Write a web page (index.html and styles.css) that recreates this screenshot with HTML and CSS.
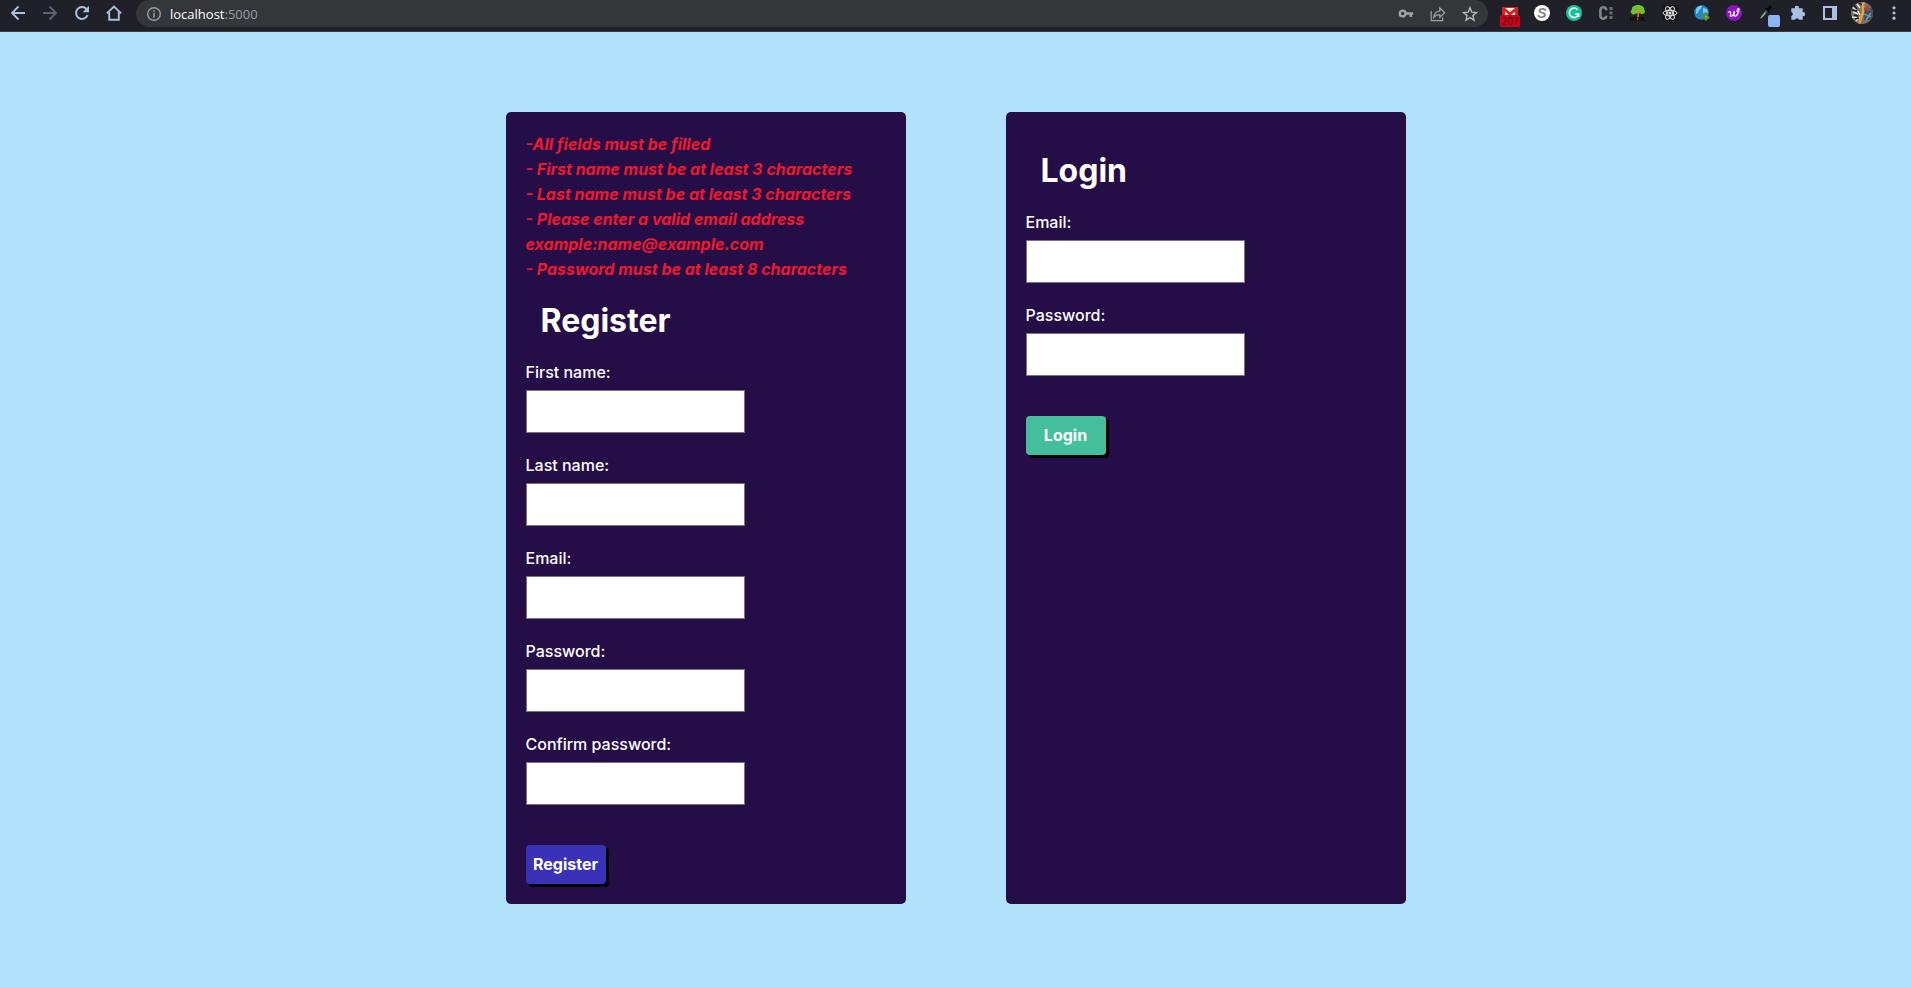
FILE: index.html
```html
<!DOCTYPE html>
<html lang="en">
<head>
<meta charset="utf-8">
<meta name="viewport" content="width=device-width, initial-scale=1">
<title>Login and Registration</title>
<link rel="stylesheet" href="styles.css">
</head>
<body>
<header class="toolbar">
  <nav class="group" aria-label="Navigation">
    <button class="tool" type="button" aria-label="Back"><svg width="16" height="16" viewBox="0 0 16 16"><path d="M15 8H2M8.500 1.500 2 8l6.500 6.500" fill="none" stroke="#a9bfe3" stroke-width="1.900"/></svg></button>
    <button class="tool" type="button" aria-label="Forward"><svg width="16" height="16" viewBox="0 0 16 16"><path d="M1 8h13M7.500 1.500 14 8l-6.500 6.500" fill="none" stroke="#5c6376" stroke-width="1.900"/></svg></button>
    <button class="tool" type="button" aria-label="Reload"><svg width="16" height="16" viewBox="0 0 16 16"><path d="M13.600 10.200A6 6 0 1 1 12.600 4" fill="none" stroke="#a9bfe3" stroke-width="2"/><path d="M15 .8v6.400H8.600z" fill="#a9bfe3"/></svg></button>
    <button class="tool" type="button" aria-label="Home"><svg width="16" height="16" viewBox="0 0 16 16"><path d="M.8 8.400 8 1.600l7.200 6.800M3.200 7v7.800h9.600V7" fill="none" stroke="#a9bfe3" stroke-width="1.900"/></svg></button>
  </nav>
  <div class="omnibox">
    <svg class="info" width="16" height="16" viewBox="0 0 16 16"><circle cx="8" cy="8" r="6.300" fill="none" stroke="#9a9da3" stroke-width="1.400"/><path d="M8 7v4.500M8 4.300v1.500" stroke="#9a9da3" stroke-width="1.600"/></svg>
    <p class="url">localhost<span class="port">:5000</span></p>
    <div class="group">
      <button class="tool" type="button" aria-label="Passwords"><svg width="16" height="16" viewBox="0 0 16 16"><circle cx="4.700" cy="7.500" r="2.900" fill="none" stroke="#a0a2a6" stroke-width="2.400"/><path d="M8 7.500h7.200M12.800 7.500V11" stroke="#a0a2a6" stroke-width="2.600" fill="none"/></svg></button>
      <button class="tool" type="button" aria-label="Share"><svg width="16" height="16" viewBox="0 0 16 16"><path d="M1.200 5v9.700h11.500v-3.500" fill="none" stroke="#a0a2a6" stroke-width="1.200"/><path d="M3.800 11.300C4.300 7.500 6.500 5.300 9.800 5V2l5 4.700-5 4.600V8.600c-2.700 0-4.500.8-6 2.700z" fill="none" stroke="#a0a2a6" stroke-width="1.200"/></svg></button>
      <button class="tool" type="button" aria-label="Bookmark"><svg width="16" height="16" viewBox="0 0 16 16"><path d="m8 1.700 1.800 4.400 4.700.4-3.600 3.100 1.100 4.600L8 11.700l-4 2.500 1.100-4.600-3.600-3.100 4.700-.4z" fill="none" stroke="#b4b6ba" stroke-width="1.400"/></svg></button>
    </div>
  </div>
  <div class="group">
    <button class="tool" type="button" aria-label="Mail"><svg width="16" height="12" viewBox="0 0 16 12"><path d="M0 0h16v12H0z" fill="#f3f3f3"/><path d="M0 0h16v2L8 9 3 4.500V12H0zM13 4.500 16 2v10h-3z" fill="#d9201b"/><path d="m3 1 5 4.300L13 1z" fill="#f3f3f3"/></svg><span class="badge">207</span></button>
    <button class="tool" type="button" aria-label="S extension"><span class="disc">S</span></button>
    <button class="tool" type="button" aria-label="Grammar"><svg width="16" height="16" viewBox="0 0 16 16"><circle cx="8" cy="8" r="8" fill="#15c39a"/><path d="M11.600 4.700A4.700 4.700 0 1 0 12.600 9H9.200M12.600 8.500v3.400" fill="none" stroke="#fff" stroke-width="1.500"/></svg></button>
    <button class="tool" type="button" aria-label="Code extension"><svg width="16" height="16" viewBox="0 0 16 16"><path d="M8.200 5.200V4.600A3 3 0 0 0 2.400 4.600v6.800a3 3 0 0 0 5.800 0v-.6" fill="none" stroke="#858585" stroke-width="2.500"/><path d="M11.500 2h3v3h-3zM11.500 6.500h3v3h-3zM11.500 11h3v3h-3z" fill="#6f6f6f"/></svg></button>
    <button class="tool" type="button" aria-label="HTML tree"><svg width="16" height="16" viewBox="0 0 16 16"><path d="M5 .8a4 4 0 0 1 6 0 3 3 0 0 1 3 3.700 2.600 2.600 0 0 1-2.500 4.400L8.500 7.500 5 9A2.600 2.600 0 0 1 2 4.600 3 3 0 0 1 5 .8z" fill="#62c92f"/><path d="M8.300 3.500 8 15M8 8.500l3-2.500M8 8 5.500 6" fill="none" stroke="#d98a2b" stroke-width="1.500"/><text x="8" y="16" text-anchor="middle" font-family="Liberation Sans, sans-serif" font-size="6" font-weight="bold" fill="#050505">HTML</text></svg></button>
    <button class="tool" type="button" aria-label="React tools"><svg width="16" height="16" viewBox="0 0 16 16"><path d="M0 0h16v16H0z" fill="#191919"/><g fill="none" stroke="#e6e6e6" stroke-width="1"><ellipse cx="8" cy="8" rx="7" ry="2.700"/><ellipse cx="8" cy="8" rx="7" ry="2.700" transform="rotate(60 8 8)"/><ellipse cx="8" cy="8" rx="7" ry="2.700" transform="rotate(120 8 8)"/></g><circle cx="8" cy="8" r="1.500" fill="#e6e6e6"/></svg></button>
    <button class="tool" type="button" aria-label="Translate"><svg width="16" height="16" viewBox="0 0 16 16"><circle cx="7.500" cy="7.500" r="7.300" fill="#2487c5"/><path d="M2 4c2-3 5-3.500 6-3L7 4 5 5 4 8 2 9zM9 3l4 1 1 4-3-1-2 2z" fill="#79c9ec"/><path d="M8 9.500c2-2 4-1 5 0l3 3-4 3.500-3-2.500z" fill="#62882c"/><path d="m11 10.500 2 1-1 2z" fill="#b5c75b"/></svg></button>
    <button class="tool" type="button" aria-label="W extension"><svg width="16" height="16" viewBox="0 0 16 16"><circle cx="8" cy="8" r="8" fill="#8d12c0"/><path d="M2.500 7.500c2-2 2.500-.5 2 2s1.500 2.500 3-.5l1-3c-1 4-.7 5.500.8 5.200 2.200-.5 3.800-5 3.600-7.200-.2-1.300-2.200.8-1.700 3" fill="none" stroke="#fff" stroke-width="1.200"/></svg></button>
    <button class="tool" type="button" aria-label="Colour picker"><svg width="16" height="16" viewBox="0 0 16 16"><path d="m2 14 1-3 5-6 1.800 1.600L5 12z" fill="#39724f"/><path d="m3.200 12.800 4-5" stroke="#bbd8c9" stroke-width="1"/><path d="m7 3.800 1-1 1 .7L11.500.7c1.500-1 3 .5 2 2L11 5.500l.7 1-1 1z" fill="#050505"/></svg><span class="swatch"></span></button>
    <button class="tool" type="button" aria-label="Extensions"><svg width="16" height="16" viewBox="0 0 16 16"><path d="M1.300 3.300h3.600a2 2 0 1 1 3.900 0h3.900v3.900a2 2 0 1 1 0 3.900v3.700H9a2 2 0 0 0-3.900 0H1.300V11a2 2 0 0 0 0-3.900z" fill="#a9bfe3"/></svg></button>
    <button class="tool" type="button" aria-label="Side panel"><svg width="16" height="16" viewBox="0 0 16 16"><path d="M1 1h14v14H1zM3 3v10h7V3z" fill="#a9bfe3" fill-rule="evenodd"/></svg></button>
    <button class="tool" type="button" aria-label="Profile"><svg width="22" height="22" viewBox="0 0 22 22"><clipPath id="face"><circle cx="11" cy="11" r="11"/></clipPath><g clip-path="url(#face)"><path d="M0 0h22v22H0z" fill="#77736b"/><path d="m1 5 4 3M2 10l5 2M1 15l5 1M6 2l3 4M5 19l4-4M7 9l2 4" stroke="#e6e2d8" stroke-width="1.500"/><path d="m3 3 3 4M1 8l5 1M3 13l4 1M4 17l4-1M8 1l3 2" stroke="#191a1e" stroke-width="1.500"/><path d="M13 6h9v12h-9z" fill="#385269"/><path d="m14 8 3-5 3 6z" fill="#c3382e"/><path d="m13 12 7 3M15 18l5-7" stroke="#8199a8" stroke-width="1.300"/><path d="M13 0c-3 6 1 9-2 13-2 3-1 6-3 9" fill="none" stroke="#ed9e35" stroke-width="2.600"/></g></svg></button>
    <button class="tool" type="button" aria-label="Menu"><svg width="16" height="16" viewBox="0 0 16 16"><g fill="#a9bfe3"><circle cx="8" cy="2.800" r="1.600"/><circle cx="8" cy="8" r="1.600"/><circle cx="8" cy="13.200" r="1.600"/></g></svg></button>
  </div>
</header>
<main class="forms">
  <form class="card">
    <p class="errors" role="alert">-All fields must be filled<br>- First name must be at least 3 characters<br>- Last name must be at least 3 characters<br>- Please enter a valid email address<br>example:name@example.com<br>- Password must be at least 8 characters</p>
    <h1 class="title">Register</h1>
    <label class="label" for="first">First name:</label>
    <input class="field" id="first" type="text">
    <label class="label" for="last">Last name:</label>
    <input class="field" id="last" type="text">
    <label class="label" for="email">Email:</label>
    <input class="field" id="email" type="text">
    <label class="label" for="password">Password:</label>
    <input class="field" id="password" type="password">
    <label class="label" for="confirm">Confirm password:</label>
    <input class="field" id="confirm" type="password">
    <button class="submit submit-register" type="button">Register</button>
  </form>
  <form class="card">
    <h1 class="title">Login</h1>
    <label class="label" for="login-email">Email:</label>
    <input class="field" id="login-email" type="text">
    <label class="label" for="login-password">Password:</label>
    <input class="field" id="login-password" type="password">
    <button class="submit submit-login" type="button">Login</button>
  </form>
</main>
</body>
</html>
```
FILE: styles.css
```css
* {
  box-sizing: border-box;
}

body {
  margin: 0;
  background: #b1e1fb;
  font-family: Inter, "Open Sans", sans-serif;
}

.toolbar {
  display: flex;
  align-items: flex-start;
  gap: 6px;
  height: 32px;
  padding: 0 1px 0 2px;
  background: #202128;
  border-bottom: 1px solid #3b3c43;
}

.group {
  display: flex;
}

.tool {
  position: relative;
  display: flex;
  align-items: center;
  justify-content: center;
  width: 32px;
  height: 26px;
  padding: 0;
  border: 0;
  background: none;
}

.omnibox {
  display: flex;
  flex: 1;
  align-items: center;
  height: 27px;
  padding: 0 2px 0 10px;
  border-radius: 14px;
  background: #35363a;
}

.url {
  flex: 1;
  margin: 0 0 0 8px;
  color: #fff;
  font: 13px/26px "Open Sans", sans-serif;
}

.port {
  color: #9a9da3;
}

.badge {
  position: absolute;
  top: 15px;
  left: 6px;
  width: 20px;
  height: 12px;
  border-radius: 2px;
  background: #d5001c;
  color: #16040a;
  font: 10px/13px "Open Sans", sans-serif;
  text-align: center;
}

.disc {
  width: 16px;
  height: 16px;
  border-radius: 50%;
  background: #fff;
  color: #858585;
  font: italic bold 14px/16px "Liberation Sans", sans-serif;
  text-align: center;
}

.swatch {
  position: absolute;
  top: 15px;
  right: 2px;
  width: 12px;
  height: 12px;
  border-radius: 2px;
  background: #8ab4f8;
}

.forms {
  display: flex;
  justify-content: center;
  gap: 100px;
  padding: 80px 20px;
}

.card {
  display: flex;
  flex-direction: column;
  align-items: flex-start;
  width: 400px;
  padding: 20px;
  border-radius: 5px;
  background: #250d47;
  color: #fff;
}

.errors {
  margin: 0;
  color: #f0182d;
  font-size: 16px;
  font-style: italic;
  font-weight: 700;
  line-height: 25px;
}

.title {
  margin: 15px;
  font-size: 32px;
  font-weight: 700;
  line-height: 48px;
}

.label {
  font-size: 16px;
  font-weight: 500;
  line-height: 25px;
}

.field {
  width: 219px;
  height: 43px;
  margin: 5px 0 20px;
  padding: 10px;
  border: 1px solid #767676;
  background: #fff;
  font: inherit;
}

.submit {
  width: 80px;
  height: 39px;
  margin-top: 20px;
  padding: 0;
  border: 0;
  border-radius: 4px;
  box-shadow: 3px 3px #000;
  color: #fff;
  font: 700 16px/39px Inter, "Open Sans", sans-serif;
}

.submit-register {
  background: #3932b8;
}

.submit-login {
  background: #43bf9b;
}
```
